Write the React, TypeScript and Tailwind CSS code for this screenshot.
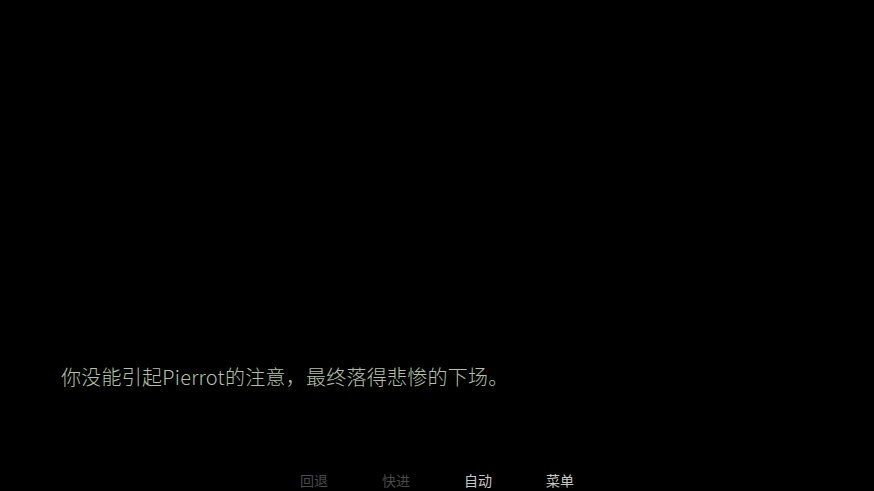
export default function App() {
  const font = { fontFamily: '"Noto Sans CJK SC", "Noto Sans", sans-serif' };
  const buttons = [
    { label: "回退", dim: true },
    { label: "快进", dim: true },
    { label: "自动", dim: false },
    { label: "菜单", dim: false },
  ];
  return (
    <div className="w-[874px] h-[491px] bg-black overflow-hidden flex flex-col" style={font}>
      <div className="pt-[362px] pl-[61px] text-[20px] leading-[30px] tracking-[0.25px] font-light text-[#b3c2a6] whitespace-nowrap">
        你没能引起Pierrot的注意，最终落得悲惨的下场。
      </div>
      <div className="mt-[78px] flex justify-center gap-[54px]">
        {buttons.map((b) => (
          <div
            key={b.label}
            className={`w-[28px] text-[14px] leading-[20px] text-center whitespace-nowrap ${b.dim ? "text-[#4a4a4a]" : "text-[#c8c8c8]"}`}
          >
            {b.label}
          </div>
        ))}
      </div>
    </div>
  );
}
